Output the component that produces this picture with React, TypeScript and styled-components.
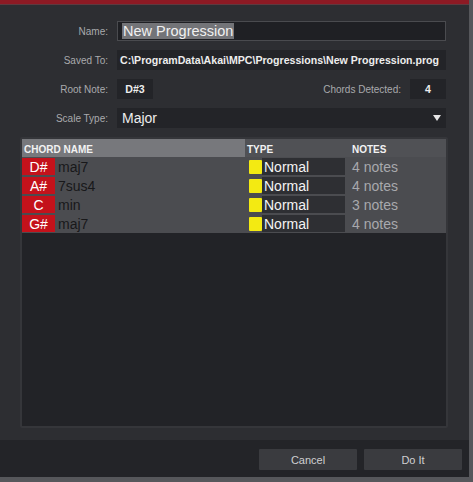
import React from "react";
import styled, { createGlobalStyle } from "styled-components";

const Global = createGlobalStyle`
  html, body { margin: 0; padding: 0; background: #56575b; }
  body { font-family: "Liberation Sans", Arial, sans-serif; width: 473px; height: 482px; overflow: hidden; }
`;

const Window = styled.div`
  width: 469px;
  height: 477px;
  background: #2d2e32;
  display: flex;
  flex-direction: column;
`;

const TitleBar = styled.div`
  height: 4px;
  background: #8d1a24;
  border-bottom: 1px solid #5e3a40;
  flex: none;
`;

const Form = styled.div`
  display: grid;
  grid-template-columns: 108px 1fr;
  column-gap: 9px;
  row-gap: 9px;
  padding: 16px 23px 0 0;
  align-items: center;
`;

const Label = styled.div`
  font-size: 10px;
  color: #a9aaad;
  text-align: right;
`;

const TextInput = styled.div`
  height: 18px;
  background: #1f2024;
  border: 1px solid #4a4b4f;
  display: flex;
  align-items: center;
  padding-left: 4px;
`;

const Selected = styled.span`
  background: #737478;
  color: #f0f0f0;
  font-size: 14.5px;
  line-height: 16px;
  padding: 0 1px;
`;

const ValueBox = styled.div<{ $w?: number; $size?: number }>`
  height: 20px;
  ${(p) => (p.$w ? `width: ${p.$w}px;` : "")}
  background: #232428;
  color: #ededed;
  font-size: ${(p) => p.$size ?? 10.6}px;
  font-weight: ${(p) => ((p.$size ?? 10) > 12 ? 400 : 700)};
  display: flex;
  align-items: center;
  padding-left: 3px;
  box-sizing: border-box;
  white-space: nowrap;
  overflow: hidden;
`;

const CenterBox = styled(ValueBox)`
  justify-content: center;
  padding-left: 0;
`;

const SplitRow = styled.div`
  display: flex;
  align-items: center;
  justify-content: space-between;
`;

const RightGroup = styled.div`
  display: flex;
  align-items: center;
  gap: 9px;
`;

const Select = styled(ValueBox)`
  justify-content: space-between;
  padding-left: 5px;
  padding-right: 5px;
`;

const Caret = styled.span`
  width: 0;
  height: 0;
  border-left: 4px solid transparent;
  border-right: 4px solid transparent;
  border-top: 6px solid #e6e6e6;
`;

const Panel = styled.div`
  margin: 9px 21px 0 20px;
  height: 291px;
  background: #222327;
  border: 2px solid #35363a;
  border-radius: 2px;
  box-sizing: border-box;
  flex: none;
  display: flex;
  flex-direction: column;
`;

const Grid = styled.div`
  display: grid;
  grid-template-columns: 223px 105px 1fr;
`;

const Head = styled.div<{ $light?: boolean }>`
  height: 18px;
  background: ${(p) => (p.$light ? "#77787c" : "#505155")};
  color: #f2f2f2;
  font-size: 10px;
  font-weight: 700;
  display: flex;
  align-items: flex-end;
  padding: 0 0 2px 2px;
  box-sizing: border-box;
`;

const Cell = styled.div`
  height: 19px;
  background: #4b4c50;
  display: flex;
  align-items: center;
  font-size: 14px;
`;

const Root = styled.span`
  width: 33px;
  height: 17px;
  background: #c4121b;
  color: #ffffff;
  display: flex;
  align-items: center;
  justify-content: center;
  margin-right: 3px;
`;

const Quality = styled.span`
  color: #18181a;
`;

const Swatch = styled.span`
  width: 13px;
  height: 14px;
  background: #f3ea12;
  margin-left: 4px;
  border-radius: 1px;
`;

const TypeBox = styled.span`
  width: 83px;
  height: 17px;
  background: #2e2f33;
  color: #f4f4f4;
  display: flex;
  align-items: center;
  padding-left: 2px;
  box-sizing: border-box;
`;

const Notes = styled.span`
  color: #a8a9ad;
  padding-left: 2px;
`;

const Spacer = styled.div`
  flex: 1;
`;

const Footer = styled.div`
  margin-top: 12px;
  flex: 1;
  background: #232428;
  display: flex;
  justify-content: flex-end;
  align-items: flex-start;
  gap: 7px;
  padding: 9px 7px 0 0;
`;

const Button = styled.div`
  width: 98px;
  height: 21px;
  background: #3a3b3f;
  color: #cfcfd1;
  font-size: 11px;
  display: flex;
  align-items: center;
  justify-content: center;
  border-radius: 1px;
`;

const chords = [
  { root: "D#", q: "maj7", n: "4 notes" },
  { root: "A#", q: "7sus4", n: "4 notes" },
  { root: "C", q: "min", n: "3 notes" },
  { root: "G#", q: "maj7", n: "4 notes" },
];

export default function App() {
  return (
    <>
      <Global />
      <Window>
        <TitleBar />
        <Form>
          <Label>Name:</Label>
          <TextInput>
            <Selected>New Progression</Selected>
          </TextInput>
          <Label>Saved To:</Label>
          <ValueBox>C:\ProgramData\Akai\MPC\Progressions\New Progression.prog</ValueBox>
          <Label>Root Note:</Label>
          <SplitRow>
            <CenterBox $w={36}>D#3</CenterBox>
            <RightGroup>
              <Label>Chords Detected:</Label>
              <CenterBox $w={36}>4</CenterBox>
            </RightGroup>
          </SplitRow>
          <Label>Scale Type:</Label>
          <Select $size={14}>
            Major
            <Caret />
          </Select>
        </Form>
        <Panel>
          <Grid>
            <Head $light>CHORD NAME</Head>
            <Head>TYPE</Head>
            <Head>NOTES</Head>
            {chords.map((c, i) => (
              <React.Fragment key={i}>
                <Cell>
                  <Root>{c.root}</Root>
                  <Quality>{c.q}</Quality>
                </Cell>
                <Cell>
                  <Swatch />
                  <TypeBox>Normal</TypeBox>
                </Cell>
                <Cell>
                  <Notes>{c.n}</Notes>
                </Cell>
              </React.Fragment>
            ))}
          </Grid>
          <Spacer />
        </Panel>
        <Footer>
          <Button>Cancel</Button>
          <Button>Do It</Button>
        </Footer>
      </Window>
    </>
  );
}
